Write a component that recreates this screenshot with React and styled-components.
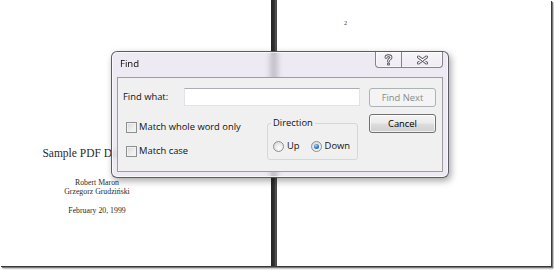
import React from 'react';
import styled, { createGlobalStyle } from 'styled-components';

const Global = createGlobalStyle`
  html, body { margin: 0; padding: 0; background: #fff; }
  body { width: 554px; height: 270px; overflow: hidden; }
  * { box-sizing: border-box; }
`;

const Viewer = styled.div`
  position: relative;
  width: 554px;
  height: 270px;
  background: #fff;
  overflow: hidden;
`;

const Spread = styled.div`
  display: flex;
  width: 551px;
  height: 266px;
  background: #fff;
  box-shadow: 1px 1px 0 #3a3a3a, 2px 2px 1px #777, 3px 3px 2px rgba(0, 0, 0, 0.2);
`;

const LeftPage = styled.div`
  width: 271px;
  flex: none;
  display: flex;
  flex-direction: column;
  align-items: center;
  padding: 146px 77px 0 0;
  font-family: "Liberation Serif", "Times New Roman", serif;
  color: #2a2a2a;
`;

const DocTitle = styled.div`
  font-size: 11.5px;
  line-height: 14px;
  white-space: nowrap;
`;

const SmallLines = styled.div`
  margin-top: ${(p) => p.$gap}px;
  font-size: 7.8px;
  line-height: 9px;
  text-align: center;
  white-space: nowrap;
`;

const Gutter = styled.div`
  width: 6px;
  flex: none;
  background: linear-gradient(90deg, #262626 0%, #303030 55%, #5c5c5c 82%, #3a3a3a 100%);
`;

const RightPage = styled.div`
  flex: 1;
  padding: 19px 0 0 67px;
  font-family: "Liberation Serif", "Times New Roman", serif;
  font-size: 6.5px;
  line-height: 8px;
  color: #444;
`;

const Dialog = styled.div`
  position: absolute;
  left: 111px;
  top: 51px;
  width: 338px;
  height: 127px;
  display: flex;
  flex-direction: column;
  padding: 0 5px 5px 5px;
  border: 1px solid rgba(55, 55, 65, 0.8);
  border-radius: 6px;
  background: rgba(232, 226, 238, 0.72);
  backdrop-filter: blur(3px);
  box-shadow: inset 0 0 0 1px rgba(255, 255, 255, 0.65), 2px 3px 7px rgba(0, 0, 0, 0.35);
  font-family: "Open Sans", "Noto Sans", sans-serif;
  font-size: 9.4px;
  color: #111;
`;

const TitleBar = styled.div`
  height: 25px;
  flex: none;
  display: flex;
  justify-content: space-between;
  align-items: flex-start;
`;

const TitleText = styled.div`
  margin: 6px 0 0 3px;
  font-size: 9.6px;
  line-height: 12px;
  color: #000;
`;

const CaptionGroup = styled.div`
  display: flex;
  height: 16px;
  border: 1px solid #85838c;
  border-top: none;
  border-radius: 0 0 4px 4px;
  overflow: hidden;
  background: linear-gradient(rgba(255, 255, 255, 0.55), rgba(238, 236, 242, 0.35));
  box-shadow: inset 0 0 0 1px rgba(255, 255, 255, 0.55);
`;

const CaptionButton = styled.div`
  width: ${(p) => p.$w}px;
  display: flex;
  align-items: center;
  justify-content: center;
  border-left: ${(p) => (p.$divided ? '1px solid #85838c' : 'none')};
`;

const Panel = styled.div`
  flex: 1;
  display: grid;
  grid-template-columns: 1fr 67px;
  column-gap: 9px;
  align-content: start;
  padding: 10px 6px 0 5px;
  background: #f0f0f0;
  border: 1px solid #9d9ca3;
`;

const MainColumn = styled.div`
  display: flex;
  flex-direction: column;
`;

const FindRow = styled.div`
  display: flex;
  align-items: center;
  height: 18px;
`;

const Label = styled.label`
  width: 61px;
  flex: none;
  line-height: 12px;
`;

const TextBox = styled.input`
  flex: 1;
  height: 18px;
  margin: 0;
  padding: 0 3px;
  border: 1px solid #e2e3ea;
  border-top-color: #abadb3;
  background: #fff;
  outline: none;
  font: inherit;
`;

const OptionsRow = styled.div`
  display: flex;
  margin-top: 10px;
`;

const CheckColumn = styled.div`
  width: 144px;
  flex: none;
  display: flex;
  flex-direction: column;
  gap: 10px;
  padding: 4px 0 0 3px;
`;

const OptionLine = styled.label`
  display: flex;
  align-items: center;
  gap: ${(p) => p.$gap || 2}px;
  height: 14px;
  line-height: 12px;
  white-space: nowrap;
`;

const CheckBox = styled.span`
  width: 11px;
  height: 11px;
  flex: none;
  border: 1px solid #8e8f8f;
  background: linear-gradient(135deg, #d6d6d6 0%, #ececec 55%, #fbfbfb 100%);
  box-shadow: inset 0 0 0 1px #f2f2f2;
`;

const GroupBox = styled.fieldset`
  width: 91px;
  margin: 1px 0 0 0;
  padding: 0 0 6px 5px;
  border: 1px solid #d3d8dc;
  border-radius: 3px;
  min-width: 0;
`;

const GroupLegend = styled.legend`
  padding: 0 2px;
  margin-left: -2px;
  line-height: 12px;
`;

const RadioRow = styled.div`
  display: flex;
  gap: 11px;
  margin-top: 10px;
`;

const Radio = styled.span`
  width: 11px;
  height: 11px;
  flex: none;
  border-radius: 50%;
  border: 1px solid #8e8f8f;
  background: radial-gradient(circle at 60% 65%, #ffffff 0%, #e6e6e6 55%, #cfcfcf 100%);
  display: flex;
  align-items: center;
  justify-content: center;
`;

const RadioDot = styled.span`
  width: 5px;
  height: 5px;
  border-radius: 50%;
  background: radial-gradient(circle at 40% 35%, #a9dcff 0%, #2e7fc2 50%, #0e3d73 100%);
`;

const ButtonColumn = styled.div`
  display: flex;
  flex-direction: column;
  gap: 7px;
`;

const Button = styled.button`
  height: 19px;
  margin: 0;
  padding: 0;
  border-radius: 3px;
  font: inherit;
  line-height: 12px;
  border: 1px solid ${(p) => (p.disabled ? '#adb2b5' : '#707070')};
  color: ${(p) => (p.disabled ? '#8a8a8a' : '#000')};
  background: ${(p) =>
    p.disabled
      ? '#f4f4f4'
      : 'linear-gradient(#f4f4f4 0%, #ebebeb 48%, #dddddd 52%, #cfcfcf 100%)'};
  box-shadow: ${(p) => (p.disabled ? 'none' : 'inset 0 0 0 1px rgba(255,255,255,0.7)')};
`;

const HelpIcon = () => (
  <svg width="9" height="12" viewBox="0 0 9 12">
    <path d="M2 3.4 C2 1.2 7 1.2 7 3.4 C7 5 4.5 5 4.5 7.2" fill="none" stroke="#4b4a55" strokeWidth="2.8" strokeLinecap="round" />
    <circle cx="4.5" cy="10" r="1.5" fill="#4b4a55" />
    <path d="M2 3.4 C2 1.2 7 1.2 7 3.4 C7 5 4.5 5 4.5 7.2" fill="none" stroke="#fff" strokeWidth="1.1" strokeLinecap="round" />
    <circle cx="4.5" cy="10" r="0.6" fill="#fff" />
  </svg>
);

const CloseIcon = () => (
  <svg width="13" height="10" viewBox="0 0 13 10">
    <g strokeLinecap="round">
      <path d="M2.5 2 L10.5 8 M10.5 2 L2.5 8" stroke="#5a5964" strokeWidth="3" />
      <path d="M2.5 2 L10.5 8 M10.5 2 L2.5 8" stroke="#fff" strokeWidth="1.2" />
    </g>
  </svg>
);

export default function App() {
  return (
    <>
      <Global />
      <Viewer>
        <Spread>
          <LeftPage>
            <DocTitle>Sample PDF Document</DocTitle>
            <SmallLines $gap={18}>
              Robert Maron
              <br />
              Grzegorz Grudziński
            </SmallLines>
            <SmallLines $gap={10}>February 20, 1999</SmallLines>
          </LeftPage>
          <Gutter />
          <RightPage>2</RightPage>
        </Spread>

        <Dialog>
          <TitleBar>
            <TitleText>Find</TitleText>
            <CaptionGroup>
              <CaptionButton $w={25}>
                <HelpIcon />
              </CaptionButton>
              <CaptionButton $w={41} $divided>
                <CloseIcon />
              </CaptionButton>
            </CaptionGroup>
          </TitleBar>
          <Panel>
            <MainColumn>
              <FindRow>
                <Label>Find what:</Label>
                <TextBox type="text" defaultValue="" />
              </FindRow>
              <OptionsRow>
                <CheckColumn>
                  <OptionLine>
                    <CheckBox />
                    Match whole word only
                  </OptionLine>
                  <OptionLine>
                    <CheckBox />
                    Match case
                  </OptionLine>
                </CheckColumn>
                <GroupBox>
                  <GroupLegend>Direction</GroupLegend>
                  <RadioRow>
                    <OptionLine $gap={3}>
                      <Radio />
                      Up
                    </OptionLine>
                    <OptionLine $gap={3}>
                      <Radio>
                        <RadioDot />
                      </Radio>
                      Down
                    </OptionLine>
                  </RadioRow>
                </GroupBox>
              </OptionsRow>
            </MainColumn>
            <ButtonColumn>
              <Button disabled>Find Next</Button>
              <Button>Cancel</Button>
            </ButtonColumn>
          </Panel>
        </Dialog>
      </Viewer>
    </>
  );
}
